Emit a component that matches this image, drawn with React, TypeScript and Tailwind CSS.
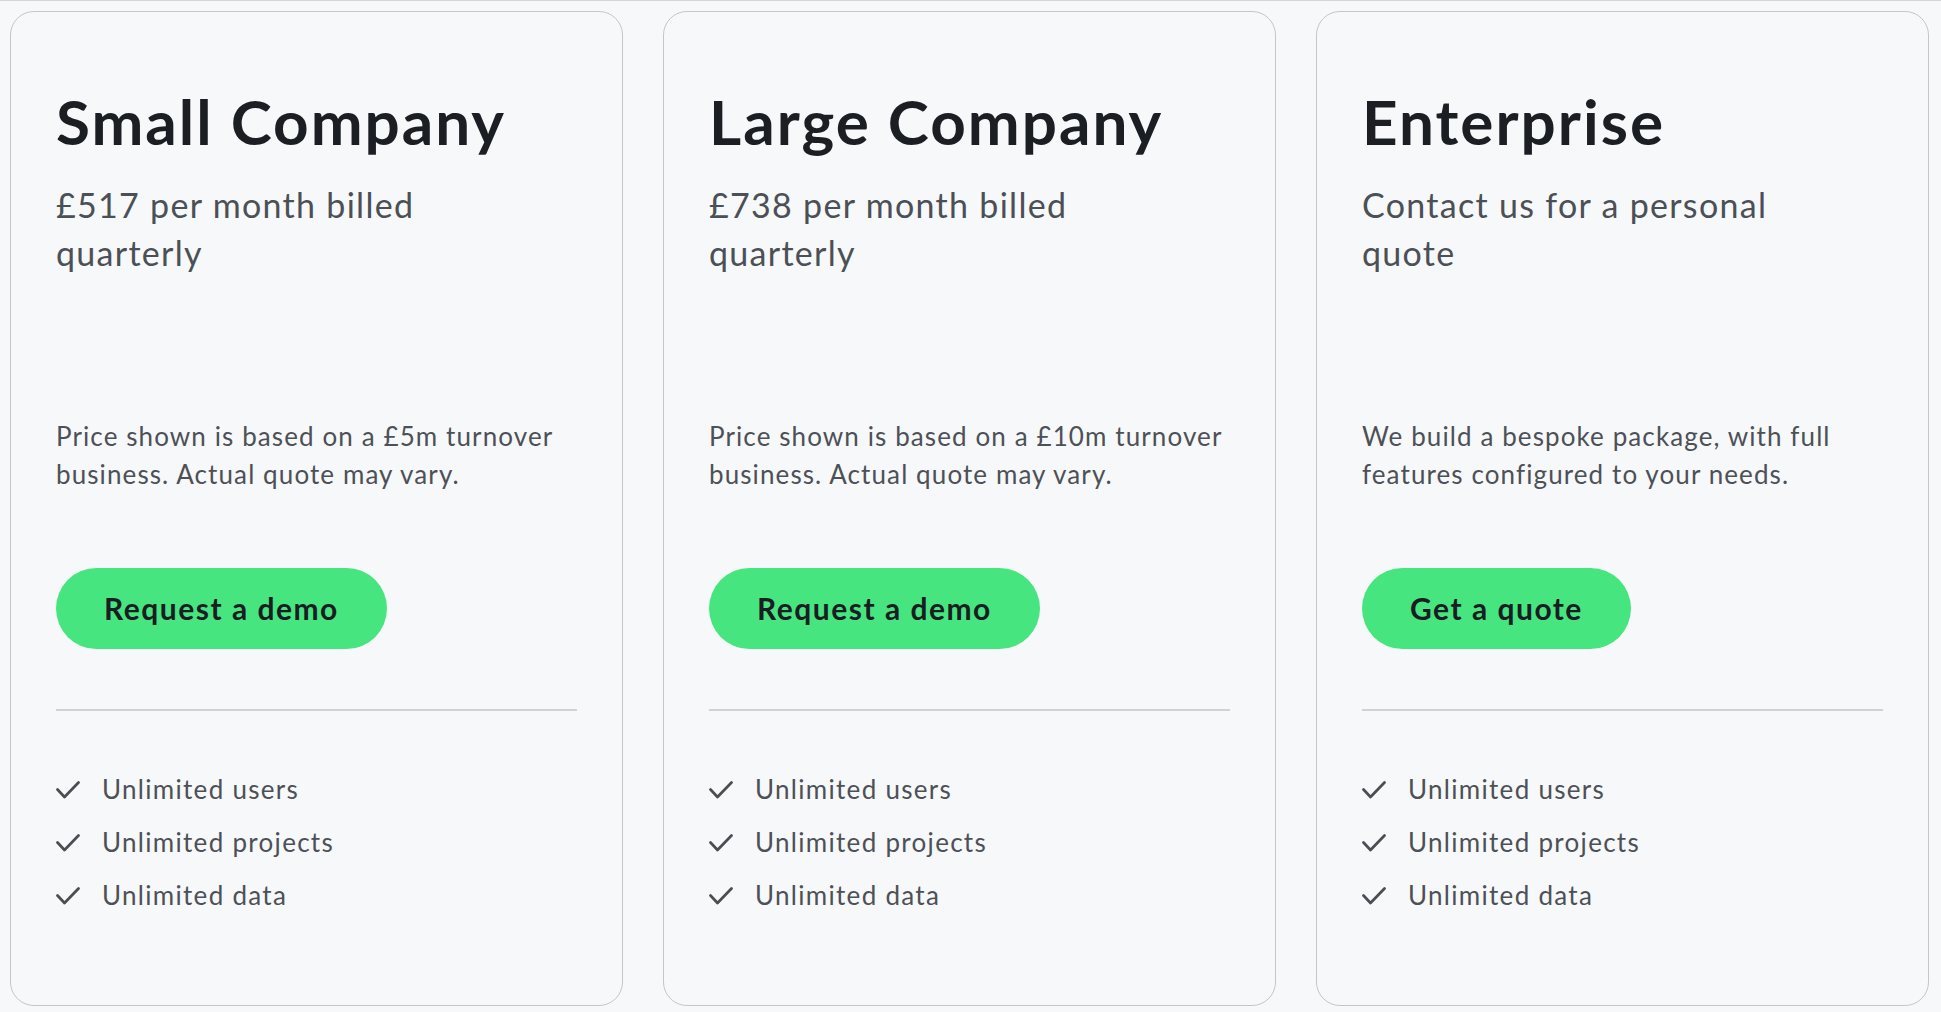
import { ReactNode } from 'react';

interface Plan {
  name: string;
  price: string[];
  note: string[];
  cta: string;
}

const plans: Plan[] = [
  {
    name: 'Small Company',
    price: ['£517 per month billed', 'quarterly'],
    note: ['Price shown is based on a £5m turnover', 'business. Actual quote may vary.'],
    cta: 'Request a demo',
  },
  {
    name: 'Large Company',
    price: ['£738 per month billed', 'quarterly'],
    note: ['Price shown is based on a £10m turnover', 'business. Actual quote may vary.'],
    cta: 'Request a demo',
  },
  {
    name: 'Enterprise',
    price: ['Contact us for a personal', 'quote'],
    note: ['We build a bespoke package, with full', 'features configured to your needs.'],
    cta: 'Get a quote',
  },
];

const features = ['Unlimited users', 'Unlimited projects', 'Unlimited data'];

// lines are kept as in the design, no reflow
const Lines = ({ lines }: { lines: string[] }) => (
  <>
    {lines.map((l, i) => (
      <span key={i} className="block whitespace-nowrap">
        {l}
      </span>
    ))}
  </>
);

const CheckMark = () => (
  <svg width="24" height="18" viewBox="0 0 24 18" fill="none" className="shrink-0">
    <polyline
      points="1.5,8.5 8.5,16 22.5,1.5"
      stroke="#4a4e54"
      strokeWidth="2.7"
      strokeLinecap="round"
      strokeLinejoin="round"
    />
  </svg>
);

const PlanCard = ({ plan }: { plan: Plan }): ReactNode => (
  <div className="flex flex-col rounded-[24px] border border-[#c3c6cb] bg-[#f7f8fa] px-[45px] pt-[72px] pb-[83px]">
    <h2 className="text-[62px] font-bold leading-[1.2] tracking-[2px] text-[#1b1f24]">{plan.name}</h2>
    <p className="mt-[23px] text-[34px] leading-[48px] tracking-[1.3px] text-[#4b5056]">
      <Lines lines={plan.price} />
    </p>
    <p className="mt-[140px] text-[26px] leading-[38px] tracking-[1.1px] text-[#4d5157]">
      <Lines lines={plan.note} />
    </p>
    <div className="mt-[75px]">
      <button className="h-[81px] rounded-full bg-[#47e580] px-[48px] text-[30px] font-bold tracking-[1.5px] text-[#1a1d21]">
        {plan.cta}
      </button>
    </div>
    <div className="mt-[60px] h-[2px] bg-[#d0d2d6]" />
    <ul className="mt-[52px] flex flex-col">
      {features.map((f) => (
        <li key={f} className="flex h-[53px] items-center gap-[22px] text-[26px] tracking-[1.3px] text-[#4d5157]">
          <CheckMark />
          <span>{f}</span>
        </li>
      ))}
    </ul>
  </div>
);

export default function App() {
  return (
    <div
      className="min-h-screen border-t border-[#d4d6da] bg-[#f7f8fa] pt-[10px] pl-[10px] pr-[12px]"
      style={{ fontFamily: 'Lato, "Open Sans", sans-serif' }}
    >
      <div className="grid grid-cols-3 gap-[40px]">
        {plans.map((p) => (
          <PlanCard key={p.name} plan={p} />
        ))}
      </div>
    </div>
  );
}
